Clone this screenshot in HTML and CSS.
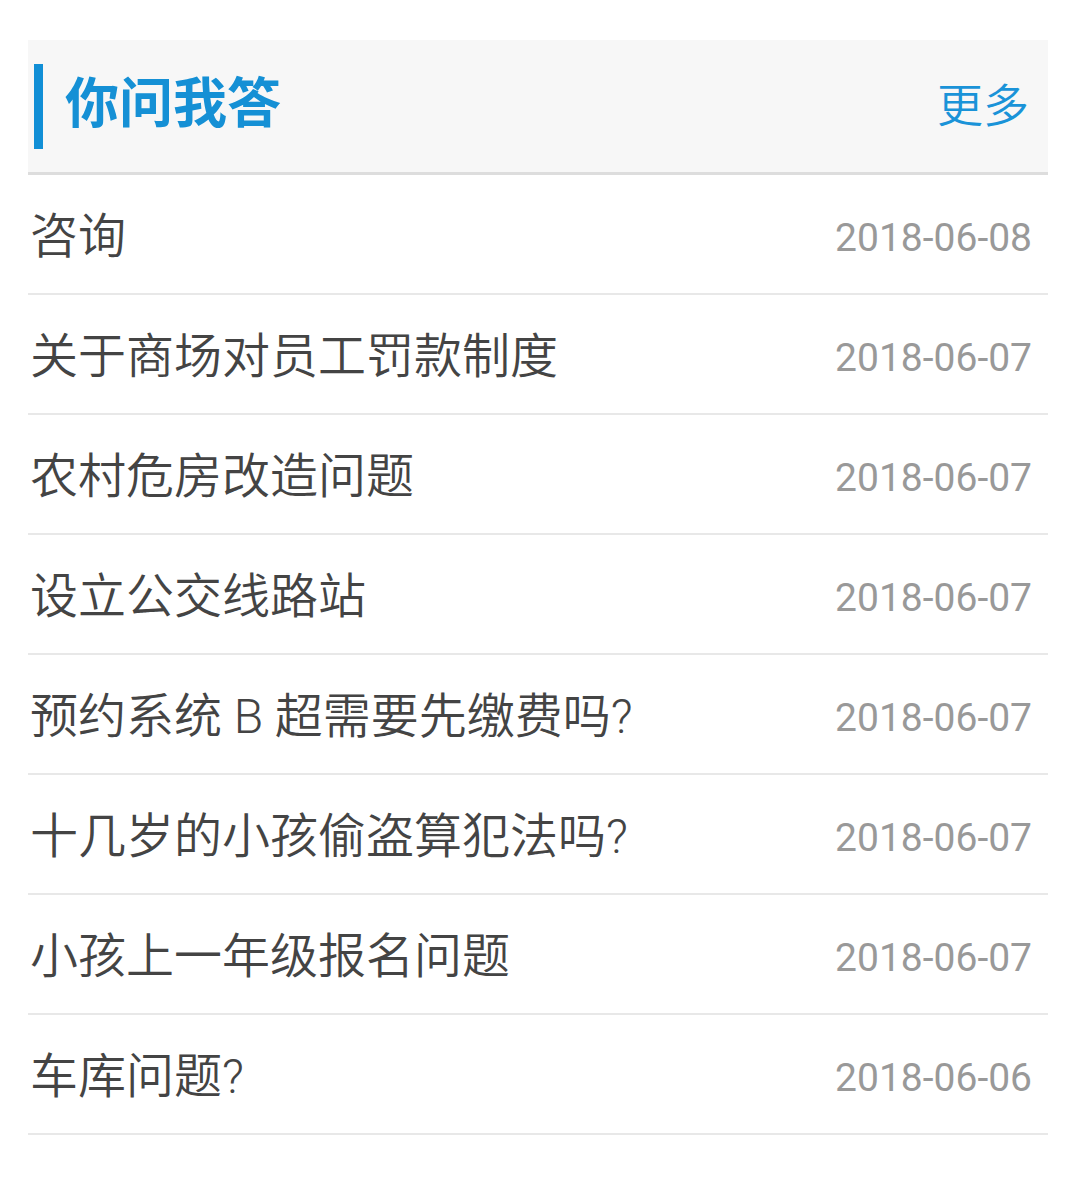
FILE: index.html
```html
<!DOCTYPE html>
<html lang="zh-CN">
<head>
    <meta charset="UTF-8">
    <title>你问我答</title>
    <link rel="stylesheet" href="styles.css">
</head>
<body>

<div class="main">
    <div class="head">
        <span class="bar"></span>
        <span class="title">你问我答</span>
        <a class="more" href="#">更多</a>
    </div>

    <ul class="list">
        <li class="item"><span class="q">咨询</span><span class="date">2018-06-08</span></li>
        <li class="item"><span class="q">关于商场对员工罚款制度</span><span class="date">2018-06-07</span></li>
        <li class="item"><span class="q">农村危房改造问题</span><span class="date">2018-06-07</span></li>
        <li class="item"><span class="q">设立公交线路站</span><span class="date">2018-06-07</span></li>
        <li class="item"><span class="q">预约系统 B 超需要先缴费吗?</span><span class="date">2018-06-07</span></li>
        <li class="item"><span class="q">十几岁的小孩偷盗算犯法吗?</span><span class="date">2018-06-07</span></li>
        <li class="item"><span class="q">小孩上一年级报名问题</span><span class="date">2018-06-07</span></li>
        <li class="item"><span class="q">车库问题?</span><span class="date">2018-06-06</span></li>
    </ul>
</div>

</body>
</html>
```

FILE: styles.css
```css
*{
    margin: 0;
    padding: 0;
}
body{
    background-color: #ffffff;
    font-family: Roboto, "Noto Sans CJK SC", sans-serif;
}
.main{
    margin: 40px 30px 0 28px;
}
.head{
    display: flex;
    align-items: center;
    height: 132px;
    padding: 0 19px 0 6px;
    background-color: #f7f7f7;
    border-bottom: 3px solid #dddddd;
}
.bar{
    width: 9px;
    height: 85px;
    background-color: #118fd6;
}
.title{
    margin: -14px 0 0 22px;
    font-size: 54px;
    font-weight: bold;
    color: #1590d5;
}
.more{
    margin: -8px 0 0 auto;
    font-size: 46px;
    font-weight: 350;
    color: #1a93d8;
    text-decoration: none;
}
.list{
    list-style: none;
}
.item{
    display: flex;
    align-items: center;
    height: 118px;
    padding: 0 16px 0 2px;
    border-bottom: 2px solid #e8e8e8;
}
.q{
    font-size: 48px;
    font-weight: 350;
    color: #444444;
    margin-top: -4px;
}
.date{
    margin-left: auto;
    margin-top: 8px;
    font-size: 39px;
    color: #999999;
}
```
